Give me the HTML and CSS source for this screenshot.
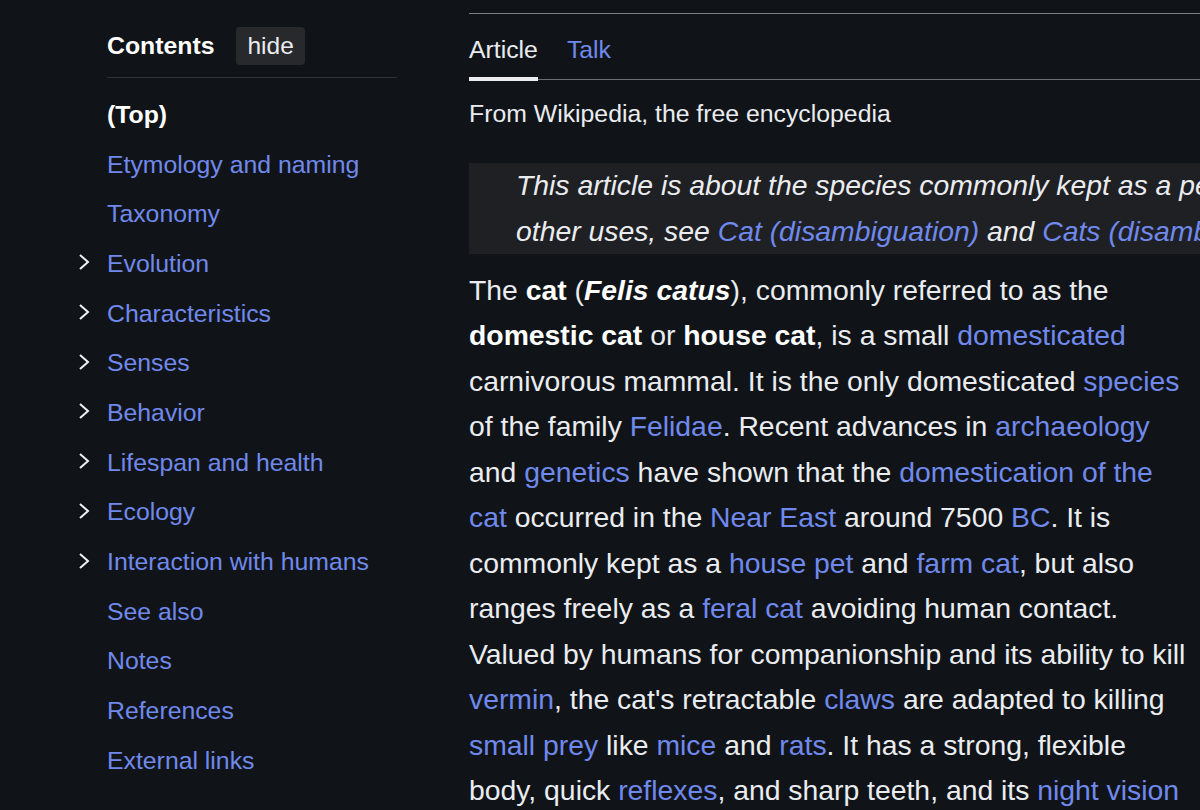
FILE: index.html
```html
<!DOCTYPE html>
<html lang="en">
<head>
<meta charset="utf-8">
<title>Cat - Wikipedia</title>
<link rel="stylesheet" href="styles.css">
</head>
<body>
<div class="page">
  <nav class="toc">
    <div class="toc-head">
      <h2 class="toc-title">Contents</h2>
      <button class="toc-hide">hide</button>
    </div>
    <ul class="toc-list">
      <li class="toc-item top"><span class="toggle"></span><a>(Top)</a></li>
      <li class="toc-item"><span class="toggle"></span><a>Etymology and naming</a></li>
      <li class="toc-item"><span class="toggle"></span><a>Taxonomy</a></li>
      <li class="toc-item"><span class="toggle"><svg viewBox="0 0 12 18" width="12" height="18"><polyline points="2,2 10,9 2,16" fill="none" stroke="#f0f1f3" stroke-width="2"/></svg></span><a>Evolution</a></li>
      <li class="toc-item"><span class="toggle"><svg viewBox="0 0 12 18" width="12" height="18"><polyline points="2,2 10,9 2,16" fill="none" stroke="#f0f1f3" stroke-width="2"/></svg></span><a>Characteristics</a></li>
      <li class="toc-item"><span class="toggle"><svg viewBox="0 0 12 18" width="12" height="18"><polyline points="2,2 10,9 2,16" fill="none" stroke="#f0f1f3" stroke-width="2"/></svg></span><a>Senses</a></li>
      <li class="toc-item"><span class="toggle"><svg viewBox="0 0 12 18" width="12" height="18"><polyline points="2,2 10,9 2,16" fill="none" stroke="#f0f1f3" stroke-width="2"/></svg></span><a>Behavior</a></li>
      <li class="toc-item"><span class="toggle"><svg viewBox="0 0 12 18" width="12" height="18"><polyline points="2,2 10,9 2,16" fill="none" stroke="#f0f1f3" stroke-width="2"/></svg></span><a>Lifespan and health</a></li>
      <li class="toc-item"><span class="toggle"><svg viewBox="0 0 12 18" width="12" height="18"><polyline points="2,2 10,9 2,16" fill="none" stroke="#f0f1f3" stroke-width="2"/></svg></span><a>Ecology</a></li>
      <li class="toc-item"><span class="toggle"><svg viewBox="0 0 12 18" width="12" height="18"><polyline points="2,2 10,9 2,16" fill="none" stroke="#f0f1f3" stroke-width="2"/></svg></span><a>Interaction with humans</a></li>
      <li class="toc-item"><span class="toggle"></span><a>See also</a></li>
      <li class="toc-item"><span class="toggle"></span><a>Notes</a></li>
      <li class="toc-item"><span class="toggle"></span><a>References</a></li>
      <li class="toc-item"><span class="toggle"></span><a>External links</a></li>
    </ul>
  </nav>
  <main class="content">
    <div class="tabs">
      <a class="tab selected">Article</a>
      <a class="tab">Talk</a>
    </div>
    <div class="tagline">From Wikipedia, the free encyclopedia</div>
    <div class="hatnote">This article is about the species commonly kept as a pet. For other uses, see <a>Cat (disambiguation)</a> and <a>Cats (disambiguation)</a>.</div>
    <p class="lead">The <b>cat</b> (<b><i>Felis catus</i></b>), commonly referred to as the <b>domestic cat</b> or <b>house cat</b>, is a small <a>domesticated</a> carnivorous mammal. It is the only domesticated <a>species</a> of the family <a>Felidae</a>. Recent advances in <a>archaeology</a> and <a>genetics</a> have shown that the <a>domestication of the cat</a> occurred in the <a>Near East</a> around 7500 <a>BC</a>. It is commonly kept as a <a>house pet</a> and <a>farm cat</a>, but also ranges freely as a <a>feral cat</a> avoiding human contact. Valued by humans for companionship and its ability to kill <a>vermin</a>, the cat's retractable <a>claws</a> are adapted to killing <a>small prey</a> like <a>mice</a> and <a>rats</a>. It has a strong, flexible body, quick <a>reflexes</a>, and sharp teeth, and its <a>night vision</a> and <a>sense of smell</a> are well developed.</p>
  </main>
</div>
</body>
</html>
```
FILE: styles.css
```css
html, body {
  margin: 0;
  padding: 0;
  background: #101418;
  overflow: hidden;
}
body {
  font-family: "Liberation Sans", Arial, sans-serif;
  color: #eaecf0;
  height: 810px;
}
a {
  color: #7089ec;
  text-decoration: none;
}
.page {
  display: flex;
  align-items: flex-start;
  padding-left: 107px;
  gap: 72px;
}
.toc {
  width: 290px;
  flex: none;
  padding-top: 27px;
}
.toc-head {
  display: flex;
  align-items: center;
  gap: 22px;
  padding-bottom: 12px;
  border-bottom: 1px solid #2f3236;
}
.toc-title {
  margin: 0;
  font-size: 24.8px;
  font-weight: bold;
  color: #ffffff;
}
.toc-hide {
  font-family: "Liberation Sans", Arial, sans-serif;
  font-size: 24.5px;
  color: #eaecf0;
  background: #27292d;
  border: none;
  border-radius: 4px;
  height: 38px;
  padding: 0 11px;
}
.toc-list {
  list-style: none;
  margin: 12px 0 0 -28px;
  padding: 0;
}
.toc-item {
  display: flex;
  align-items: center;
  height: 49.7px;
  font-size: 24.8px;
}
.toc-item.top a {
  color: #ffffff;
  font-weight: bold;
}
.toggle {
  width: 28px;
  flex: none;
  display: flex;
  align-items: center;
}
.toggle svg {
  display: block;
  margin-top: -3px;
  margin-left: -1px;
}
.content {
  width: 1000px;
  flex: none;
  padding-top: 13px;
}
.tabs {
  display: flex;
  gap: 29px;
  border-top: 1px solid #7b7f85;
  border-bottom: 1px solid #6b6f74;
  height: 65px;
  align-items: flex-end;
}
.tab {
  font-size: 24.8px;
  line-height: 30px;
  padding-bottom: 12px;
  border-bottom: 4px solid transparent;
  margin-bottom: -2px;
}
.tab.selected {
  color: #eaecf0;
  border-bottom-color: #eaecf0;
}
.tagline {
  font-size: 24.8px;
  line-height: 39.2px;
  margin-top: 14px;
}
.hatnote {
  width: 862px;
  margin-top: 30px;
  background: #1f2023;
  font-style: italic;
  font-size: 28.35px;
  line-height: 45.4px;
  padding-left: 47px;
  box-sizing: border-box;
}
.lead {
  max-width: 722px;
  margin: 14px 0 0;
  font-size: 28.35px;
  line-height: 45.45px;
}
.lead b {
  color: #ffffff;
}
```
